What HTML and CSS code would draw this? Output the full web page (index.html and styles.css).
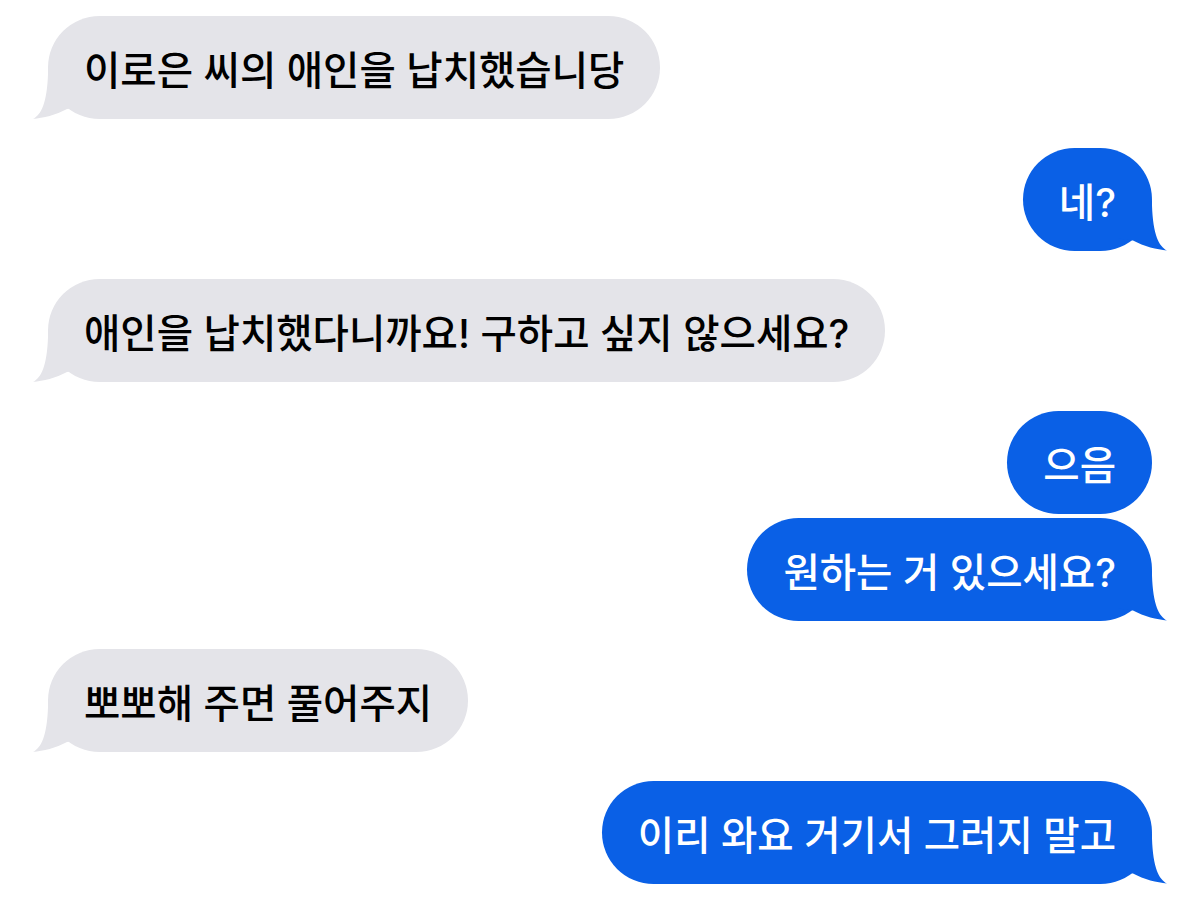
FILE: index.html
```html
<!DOCTYPE html>
<html lang="ko">
<head>
    <meta charset="UTF-8">
    <meta name="viewport" content="width=device-width, initial-scale=1.0">
    <title>메시지</title>
    <link rel="stylesheet" href="styles.css">
</head>
<body>
    <div class="chat">
        <div class="msg in tail">이로은 씨의 애인을 납치했습니당</div>
        <div class="msg out tail">네?</div>
        <div class="msg in tail">애인을 납치했다니까요! 구하고 싶지 않으세요?</div>
        <!-- 연속 메시지: 마지막 말풍선에만 꼬리 -->
        <div class="msg out grouped">으음</div>
        <div class="msg out tail">원하는 거 있으세요?</div>
        <div class="msg in tail">뽀뽀해 주면 풀어주지</div>
        <div class="msg out tail">이리 와요 거기서 그러지 말고</div>
    </div>
</body>
</html>
```
FILE: styles.css
```css
body {
    margin: 0;
    background: #fff;
    font-family: 'Inter', 'Noto Sans CJK KR', sans-serif;
}
.chat {
    display: flex;
    flex-direction: column;
    gap: 28.5px;
    padding: 16px 48px;
}
.msg {
    position: relative;
    height: 103px;
    box-sizing: border-box;
    padding: 0 36px;
    display: flex;
    align-items: center;
    border-radius: 52px;
    font-size: 39.5px;
    font-weight: 500;
    white-space: nowrap;
}
.msg.grouped {
    margin-bottom: -24.5px;
}
.in {
    align-self: flex-start;
    background: #e4e4e9;
    color: #000;
}
.out {
    align-self: flex-end;
    background: #0a60e6;
    color: #fff;
}

/* 말풍선 꼬리 */
.tail::before {
    content: "";
    position: absolute;
    bottom: 0;
    width: 50px;
    height: 50px;
}
.in.tail::before {
    left: -16px;
    background: #e4e4e9;
    clip-path: path('M16 0 L50 0 L50 38 L35 40 C24 46 11 49 1 50 C9 46 15 34 16 5 Z');
}
.out.tail::before {
    right: -16px;
    background: #0a60e6;
    clip-path: path('M34 0 L0 0 L0 38 L15 40 C26 46 39 49 49 50 C41 46 35 34 34 5 Z');
}
```
